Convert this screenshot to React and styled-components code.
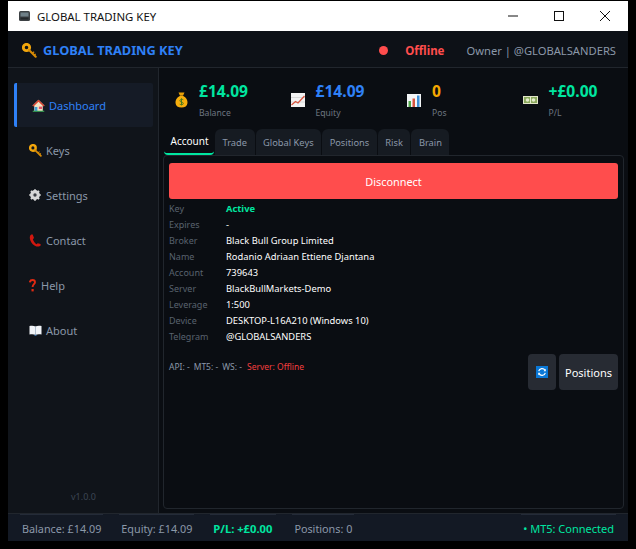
import React from "react";
import styled, { createGlobalStyle } from "styled-components";

const GlobalStyle = createGlobalStyle`
  html, body {
    margin: 0;
    padding: 0;
    background: #000;
  }
  body {
    font-family: "Noto Sans", "Open Sans", sans-serif;
  }
`;

const KeyIcon = ({ size = 15 }) => (
  <svg width={size} height={size} viewBox="0 0 16 16">
    <circle cx="4.8" cy="4.8" r="3.4" fill="none" stroke="#f2a60c" strokeWidth="3" />
    <path d="M7.5 7.5 14.6 14.6" stroke="#d98c06" strokeWidth="2.2" strokeLinecap="round" />
    <path d="M11 11l2-1.6M13 13l1.6-1.4" stroke="#d98c06" strokeWidth="1.3" />
  </svg>
);

const HouseIcon = () => (
  <svg width="13" height="13" viewBox="0 0 14 14">
    <path d="M7 .8 .4 7.2h2V13h9.2V7.2h2z" fill="#f4e3c4" />
    <path d="M7 .8 .4 7.2l1.2.8L7 3l5.4 5 1.2-.8z" fill="#d9402f" />
    <rect x="2.8" y="8.6" width="3" height="4.4" fill="#3f9fd6" />
    <rect x="7.4" y="8.2" width="3.4" height="2.6" fill="#e4556b" />
    <rect x=".8" y="12.6" width="12.4" height="1.2" fill="#3aa655" />
  </svg>
);

const GearIcon = () => (
  <svg width="12" height="12" viewBox="0 0 12 12">
    <circle cx="6" cy="6" r="3.6" fill="none" stroke="#d8d8d8" strokeWidth="2.6" />
    <path d="M6 .2v11.6M.2 6h11.6M1.9 1.9l8.2 8.2M10.1 1.9l-8.2 8.2" stroke="#d8d8d8" strokeWidth="1.7" />
    <circle cx="6" cy="6" r="1.7" fill="#3a3d42" />
  </svg>
);

const PhoneIcon = () => (
  <svg width="12" height="13" viewBox="0 0 12 13">
    <path
      d="M2.2.6C.6 1.6.4 4 1.4 6.6c1 2.7 3.4 5.3 6 5.8 1.5.3 3.4.1 4.2-.8V10L8.7 9.3 7.6 10.2C6.2 9.4 4.400 7 3.900 5.200L5 4.100 3.700.6z"
      fill="#d1170f"
    />
  </svg>
);

const QuestionIcon = () => (
  <svg width="7" height="13" viewBox="0 0 7 13">
    <path d="M.8 3.400C.9 1.900 2 1 3.500 1 5.100 1 6 2 6 3.300 6 5.100 3.600 5.400 3.600 8" fill="none" stroke="#e02a12" strokeWidth="1.9" />
    <rect x="2.500" y="10" width="2.200" height="2.400" fill="#e02a12" />
  </svg>
);

const BookIcon = () => (
  <svg width="13" height="11" viewBox="0 0 13 11">
    <path d="M.5 1C2.500.4 5 .5 6.500 1.500 8 .5 10.500.4 12.500 1v8.500C10.500 9 8 9 6.500 10 5 9 2.500 9 .5 9.500z" fill="#f1f4f8" />
    <path d="M6.500 1.500V10" stroke="#9fb0c2" strokeWidth=".8" />
    <path d="M5.500 10.300h2" stroke="#3f7fc2" strokeWidth="1" />
  </svg>
);

const BagIcon = () => (
  <svg width="13" height="16" viewBox="0 0 13 16">
    <path d="M3.500.5h6L8 3.800H5z" fill="#e89f06" />
    <path d="M4.800 4C1.800 5.500.2 8.300.5 11c.3 3 2.500 4.500 6 4.500s5.700-1.500 6-4.500c.3-2.700-1.300-5.500-4.300-7z" fill="#f7ae0d" />
    <path d="M8.300 7.800C7.200 7 4.900 7.200 4.900 8.700c0 1.800 3.400 1 3.400 2.700 0 1.500-2.400 1.600-3.600.8M6.500 6.300v7" fill="none" stroke="#4d7a1c" strokeWidth="1" />
  </svg>
);

const ChartUpIcon = () => (
  <svg width="14" height="14" viewBox="0 0 14 14">
    <rect width="14" height="14" fill="#f3f3f3" />
    <path d="M0 4.500h14M0 9h14" stroke="#cfcfcf" strokeWidth=".8" />
    <path d="M.5 12 4.500 8.500l2.500 1.500 6.500-7" fill="none" stroke="#d9553f" strokeWidth="1.3" />
  </svg>
);

const BarsIcon = () => (
  <svg width="14" height="13" viewBox="0 0 14 13">
    <rect width="14" height="13" fill="#f3f5f7" />
    <rect x="1.500" y="7" width="2.500" height="6" fill="#52a84a" />
    <rect x="5.500" y="4.500" width="2.500" height="8.500" fill="#d9553f" />
    <rect x="10" y="1.500" width="2.500" height="11.500" fill="#3f8fd6" />
  </svg>
);

const BillIcon = () => (
  <svg width="15" height="8" viewBox="0 0 15 8">
    <rect width="15" height="8" fill="#e2e6c8" />
    <rect x="1" y="1" width="13" height="6" fill="#8aa85c" />
    <circle cx="4.500" cy="4" r="1.800" fill="#e4eccb" />
    <circle cx="10.500" cy="4" r="1.800" fill="#e4eccb" />
    <rect x="7" y="1" width="1" height="6" fill="#e4eccb" />
  </svg>
);

const RefreshIcon = () => (
  <svg width="12" height="12" viewBox="0 0 12 12">
    <rect width="12" height="12" fill="#0a78d7" />
    <path d="M2.700 5.200A3.400 3.400 0 0 1 9 4.400M9.300 6.800A3.400 3.400 0 0 1 3 7.600" fill="none" stroke="#fff" strokeWidth="1.2" />
    <path d="M9.800 2.800v2.400H7.500zM2.200 9.200V6.800h2.300z" fill="#fff" />
  </svg>
);

const AppGlyph = () => (
  <svg width="11" height="10" viewBox="0 0 11 10">
    <rect width="11" height="10" rx="1.5" fill="#3c4144" />
    <rect x="1.500" y="1.500" width="8" height="4" fill="#6f8088" />
    <rect x="1.500" y="6.500" width="8" height="2" fill="#22272a" />
  </svg>
);

const Window = styled.div`
  box-sizing: border-box;
  width: 620px;
  height: 540px;
  margin: 1px 8px 8px;
  display: flex;
  flex-direction: column;
  background: #0a0d12;
`;

const TitleBar = styled.div`
  height: 30px;
  flex: none;
  background: #fff;
  display: flex;
  align-items: center;
  padding-left: 11px;
  color: #111;
`;

const TitleText = styled.span`
  margin-left: 7px;
  flex: 1;
  font-size: 11.4px;
`;

const WinButton = styled.span`
  width: 46px;
  height: 30px;
  display: flex;
  align-items: center;
  justify-content: center;
`;

const Header = styled.header`
  height: 34px;
  flex: none;
  display: flex;
  align-items: center;
  padding: 2px 12px 0 14px;
  box-sizing: content-box;
  background: #0d1117;
  border-bottom: 1px solid #21262d;
`;

const Brand = styled.div`
  display: flex;
  align-items: center;
  gap: 6px;
  color: #2f81f7;
  font-size: 12.8px;
  font-weight: 700;
  flex: 1;
`;

const StatusDot = styled.span`
  width: 9px;
  height: 9px;
  border-radius: 50%;
  background: #ff4d4d;
`;

const OfflineText = styled.span`
  color: #ff4d4d;
  font-size: 11.5px;
  font-weight: 700;
  margin: 0 22px 0 17px;
`;

const OwnerText = styled.span`
  color: #8b98a9;
  font-size: 11.2px;
`;

const Body = styled.div`
  flex: 1;
  min-height: 0;
  display: flex;
`;

const Sidebar = styled.nav`
  width: 150px;
  flex: none;
  box-sizing: content-box;
  background: #10141a;
  border-right: 1px solid #21262d;
  display: flex;
  flex-direction: column;
  padding-top: 15px;
`;

const NavItem = styled.div`
  height: 44px;
  width: 139px;
  margin: 0 0 1px 6px;
  box-sizing: border-box;
  padding-left: ${(p) => (p.$active ? "15px" : "12px")};
  display: flex;
  align-items: center;
  gap: ${(p) => p.$gap || 4}px;
  font-size: 11px;
  color: ${(p) => (p.$active ? "#2f81f7" : "#8b98a9")};
  background: ${(p) => (p.$active ? "#151b26" : "transparent")};
  border-left: 3px solid ${(p) => (p.$active ? "#2f81f7" : "transparent")};
  border-radius: 2px;
`;

const Version = styled.div`
  margin-top: auto;
  padding: 0 0 10px 63px;
  font-size: 9px;
  color: #3d4654;
`;

const Main = styled.main`
  flex: 1;
  min-width: 0;
  display: flex;
  flex-direction: column;
  padding: 0 4px 4px 4px;
`;

const Stats = styled.section`
  height: 61px;
  flex: none;
  display: grid;
  grid-template-columns: repeat(4, 116.5px);
`;

const Stat = styled.div`
  display: flex;
  align-items: center;
  padding: 3px 0 0 12px;
`;

const StatIcon = styled.span`
  width: 24px;
  flex: none;
  display: flex;
  align-items: center;

  svg {
    margin-left: ${(p) => p.$nudge || 0}px;
  }
`;

const StatText = styled.div`
  display: flex;
  flex-direction: column;
  gap: 6px;
`;

const StatValue = styled.div`
  color: ${(p) => p.$color};
  font-size: 15.6px;
  font-weight: 700;
  line-height: 20px;
`;

const StatLabel = styled.div`
  color: #6e7681;
  font-size: 8.6px;
  line-height: 13px;
`;

const Tabs = styled.div`
  height: 26px;
  flex: none;
  display: flex;
  gap: 1px;
  margin-left: 1px;
`;

const Tab = styled.div`
  padding: ${(p) => (p.$active ? "0 5.5px 0 6.5px" : "0 7.5px")};
  display: flex;
  align-items: center;
  font-size: ${(p) => (p.$active ? "10px" : "9.3px")};
  color: ${(p) => (p.$active ? "#fff" : "#8b98a9")};
  background: ${(p) => (p.$active ? "transparent" : "#161b22")};
  border-radius: 6px 6px 0 0;
  border-bottom: ${(p) => (p.$active ? "2px solid #00e6a0" : "0")};
  border-bottom-left-radius: ${(p) => (p.$active ? "4px" : "0")};
  border-bottom-right-radius: ${(p) => (p.$active ? "4px" : "0")};
`;

const Panel = styled.section`
  flex: 1;
  min-height: 0;
  box-sizing: border-box;
  border: 1px solid #21262d;
  border-radius: 4px;
  padding: 7px 5px;
  display: flex;
  flex-direction: column;
`;

const DisconnectButton = styled.button`
  height: 36px;
  flex: none;
  border: 0;
  border-radius: 3px;
  padding: 1px 0 0;
  background: #ff4d4d;
  color: #fff;
  font: inherit;
  font-size: 10.9px;
`;

const InfoList = styled.div`
  margin-top: 1px;
`;

const InfoRow = styled.div`
  height: 16px;
  display: flex;
  align-items: center;
`;

const InfoLabel = styled.span`
  width: 57px;
  flex: none;
  color: #59626e;
  font-size: 9px;
`;

const InfoValue = styled.span`
  color: ${(p) => p.$color || "#fff"};
  font-size: 9.35px;
  font-weight: ${(p) => p.$weight || 400};
`;

const FooterRow = styled.div`
  margin-top: 10px;
  display: flex;
  align-items: center;
  gap: 3px;
`;

const ApiLine = styled.div`
  flex: 1;
  display: flex;
  gap: 4px;
  padding-bottom: 12px;
  font-size: 8.5px;
  color: #8b98a9;
`;

const ServerState = styled.span`
  color: #f43f3f;
  margin-left: 1px;
`;

const SmallButton = styled.button`
  height: 36px;
  width: ${(p) => p.$width}px;
  border: 0;
  border-radius: 4px;
  background: #272b33;
  color: #fff;
  font: inherit;
  font-size: 11px;
  display: flex;
  align-items: center;
  justify-content: center;
  padding: 0;
`;

const StatusBar = styled.footer`
  height: 27px;
  flex: none;
  display: flex;
  background: #131924;
  border-top: 1px solid #21262d;
  padding: 0 12px;
  font-size: 10.8px;
  color: #8b98a9;
`;

const StatusItem = styled.div`
  display: flex;
  align-items: center;
  padding: 1px ${(p) => (p.$strong ? 4 : 2)}px 0 ${(p) => (p.$strong ? 3 : 2)}px;
  margin-left: ${(p) => (p.$push ? "auto" : "0")};
  margin-right: ${(p) => (p.$push ? "0" : "16px")};
  color: ${(p) => p.$color || "inherit"};
  font-size: ${(p) => (p.$strong ? "11.2px" : p.$push ? "11px" : "inherit")};
  font-weight: ${(p) => (p.$strong ? 700 : 400)};
  border-top: 1px solid #242b38;
`;

const navItems = [
  { label: "Dashboard", icon: <HouseIcon />, active: true },
  { label: "Keys", icon: <KeyIcon size={13} /> },
  { label: "Settings", icon: <GearIcon />, gap: 5 },
  { label: "Contact", icon: <PhoneIcon />, gap: 5 },
  { label: "Help", icon: <QuestionIcon />, gap: 5 },
  { label: "About", icon: <BookIcon /> },
];

const stats = [
  { label: "Balance", value: "£14.09", color: "#00e6a0", icon: <BagIcon /> },
  { label: "Equity", value: "£14.09", color: "#2f81f7", icon: <ChartUpIcon />, nudge: -1 },
  { label: "Pos", value: "0", color: "#f5a800", icon: <BarsIcon />, nudge: -1 },
  { label: "P/L", value: "+£0.00", color: "#00e6a0", icon: <BillIcon />, nudge: -2 },
];

const tabs = ["Account", "Trade", "Global Keys", "Positions", "Risk", "Brain"];

const infoRows = [
  ["Key", "Active"],
  ["Expires", "-"],
  ["Broker", "Black Bull Group Limited"],
  ["Name", "Rodanio Adriaan Ettiene Djantana"],
  ["Account", "739643"],
  ["Server", "BlackBullMarkets-Demo"],
  ["Leverage", "1:500"],
  ["Device", "DESKTOP-L16A210 (Windows 10)"],
  ["Telegram", "@GLOBALSANDERS"],
];

const App = () => {
  return (
    <>
      <GlobalStyle />
      <Window>
        <TitleBar>
          <AppGlyph />
          <TitleText>GLOBAL TRADING KEY</TitleText>
          <WinButton>
            <svg width="10" height="10" viewBox="0 0 10 10">
              <path d="M0 5h10" stroke="#111" strokeWidth="1" />
            </svg>
          </WinButton>
          <WinButton>
            <svg width="10" height="10" viewBox="0 0 10 10">
              <rect x=".5" y=".5" width="9" height="9" fill="none" stroke="#111" strokeWidth="1" />
            </svg>
          </WinButton>
          <WinButton>
            <svg width="10" height="10" viewBox="0 0 10 10">
              <path d="M0 0l10 10M10 0 0 10" stroke="#111" strokeWidth="1" />
            </svg>
          </WinButton>
        </TitleBar>
        <Header>
          <Brand>
            <KeyIcon />
            GLOBAL TRADING KEY
          </Brand>
          <StatusDot />
          <OfflineText>Offline</OfflineText>
          <OwnerText>Owner | @GLOBALSANDERS</OwnerText>
        </Header>
        <Body>
          <Sidebar>
            {navItems.map(({ label, icon, active, gap }) => (
              <NavItem key={label} $active={active} $gap={gap}>
                {icon}
                {label}
              </NavItem>
            ))}
            <Version>v1.0.0</Version>
          </Sidebar>
          <Main>
            <Stats>
              {stats.map(({ label, value, color, icon, nudge }) => (
                <Stat key={label}>
                  <StatIcon $nudge={nudge}>{icon}</StatIcon>
                  <StatText>
                    <StatValue $color={color}>{value}</StatValue>
                    <StatLabel>{label}</StatLabel>
                  </StatText>
                </Stat>
              ))}
            </Stats>
            <Tabs>
              {tabs.map((tab) => (
                <Tab key={tab} $active={tab === "Account"}>
                  {tab}
                </Tab>
              ))}
            </Tabs>
            <Panel>
              <DisconnectButton>Disconnect</DisconnectButton>
              <InfoList>
                {infoRows.map(([label, value]) => (
                  <InfoRow key={label}>
                    <InfoLabel>{label}</InfoLabel>
                    {label === "Key" ? (
                      <InfoValue $color="#00e6a0" $weight={700}>
                        {value}
                      </InfoValue>
                    ) : (
                      <InfoValue>{value}</InfoValue>
                    )}
                  </InfoRow>
                ))}
              </InfoList>
              <FooterRow>
                <ApiLine>
                  <span>API: -</span>
                  <span>MT5: -</span>
                  <span>WS: -</span>
                  <ServerState>Server: Offline</ServerState>
                </ApiLine>
                <SmallButton $width={28}>
                  <RefreshIcon />
                </SmallButton>
                <SmallButton $width={59}>Positions</SmallButton>
              </FooterRow>
            </Panel>
          </Main>
        </Body>
        <StatusBar>
          <StatusItem>Balance: £14.09</StatusItem>
          <StatusItem>Equity: £14.09</StatusItem>
          <StatusItem $strong $color="#00e6a0">
            P/L: +£0.00
          </StatusItem>
          <StatusItem>Positions: 0</StatusItem>
          <StatusItem $push $color="#00e6a0">
            • MT5: Connected
          </StatusItem>
        </StatusBar>
      </Window>
    </>
  );
};

export default App;
